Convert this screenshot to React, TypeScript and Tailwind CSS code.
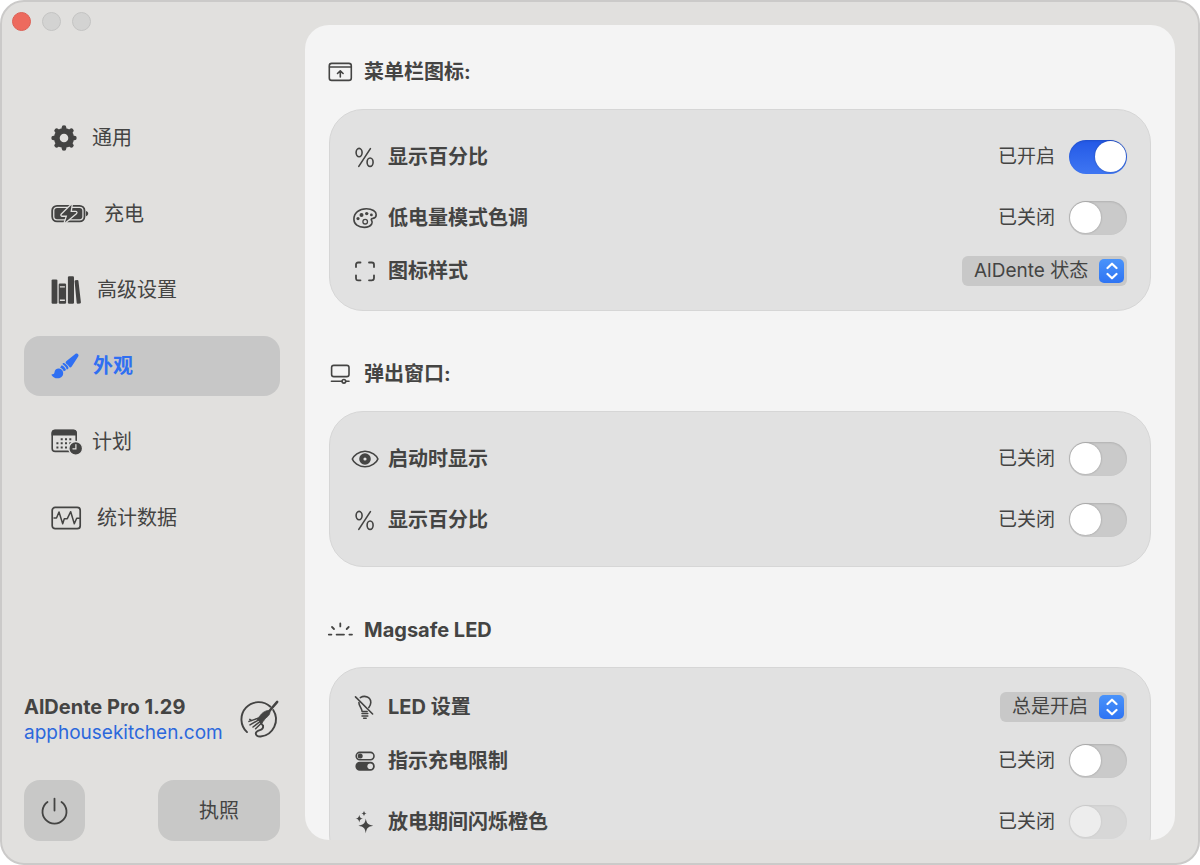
import React, { useId, useState } from "react";

const fontStack = "font-['Inter','Noto_Sans_CJK_SC',sans-serif]";

/* sidebar icons */

const GearIcon = () => (
  <svg width="26" height="26" viewBox="0 0 26 26" fill="none" stroke="currentColor">
    <circle cx="13" cy="13" r="7.2" strokeWidth="5.8" />
    <g strokeWidth="4.6" strokeLinecap="round">
      {[0, 45, 90, 135, 180, 225, 270, 315].map((a) => (
        <path key={a} d="M13 4.5V2.6" transform={`rotate(${a} 13 13)`} />
      ))}
    </g>
  </svg>
);

const BatteryIcon = () => (
  <svg width="38" height="20" viewBox="0 0 38 20" fill="none">
    <rect x="1.2" y="1.8" width="32.3" height="15.6" rx="4.8" stroke="currentColor" strokeWidth="1.8" />
    <rect x="3.4" y="4" width="27.9" height="11.2" rx="2.6" fill="currentColor" />
    <path d="M35 7c1.5.4 2.200 1.400 2.200 2.600s-.7 2.200-2.200 2.600z" fill="currentColor" />
    <path
      d="M20.6.8 10.8 10.4c-.5.6-.3 1.200.5 1.200h4.900L13.900 18.400 25 9.200c.6-.6.3-1.200-.4-1.200h-5.100z"
      fill="currentColor"
      stroke="#e1e0de"
      strokeWidth="2.6"
      strokeLinejoin="round"
      style={{ paintOrder: "stroke" }}
    />
  </svg>
);

const BooksIcon = () => (
  <svg width="31" height="28" viewBox="0 0 31 28" fill="currentColor">
    <rect x=".6" y="3.4" width="5.8" height="24.3" rx="1.2" />
    <rect x="7.7" y="7.6" width="7.4" height="20.1" rx="1.2" />
    <path d="M8.9 10.9h5M8.900 24.200h5" stroke="#e1e0de" strokeWidth="1.4" />
    <rect x="16.9" y=".3" width="6.1" height="27.4" rx="1.2" />
    <path d="M23.6 5.200c0-.6.3-.9.800-1l2-.2c.6 0 .9.300 1 .800l2.500 21.500c.1.600-.2 1-.8 1.100l-2.400.3c-.6 0-.9-.3-1-.8z" />
  </svg>
);

const BrushIcon = () => (
  <svg width="27" height="26" viewBox="0 0 27 26" fill="currentColor" className="overflow-visible">
    <path d="M24.300.9c2-1.300 4.100.8 2.900 2.700l-6.500 9.900c-.8 1.200-2 1.300-2.700.1-.7-1.200-1.600-2.100-2.700-2.800-1-.7-.9-1.700.2-2.700z" />
    <path d="M13.400 10.200c-.6-.4-1.100-.3-1.500.1-.5.500-.3.900.200 1.300 1.600 1.100 2.800 2.600 3.400 4.300.2.600.8.700 1.300.2.700-.6.800-1.100.5-1.900-.7-1.700-2.200-3.200-3.900-4z" />
    <path d="M10.700 12.200c-.7.700-1.200 1.500-1.500 2.600 1.700.6 2.900 1.700 3.500 3.400 1-.2 1.700-.6 2.300-1.300-.6-2.100-2.100-3.800-4.300-4.700z" />
    <path d="M8.200 15.600c-2.600-.3-4.500 1.500-4.700 3.700-.1 1.400-.8 2-2.200 1.900-.6 0-.9.500-.6 1 1.300 2.200 3.600 3.300 6.200 3.100 3.500-.2 5.700-2.900 5.200-5.900-.3-2.100-1.800-3.500-3.900-3.800z" />
  </svg>
);

const CalendarIcon = () => (
  <svg width="26" height="26" viewBox="0 0 26 26" fill="none" className="overflow-visible">
    <rect x="1.2" y="1.4" width="24" height="21" rx="3" stroke="currentColor" strokeWidth="1.6" />
    <path d="M.6 6.600V4C.6 1.900 1.900.7 4 .7h18.400c2.100 0 3.400 1.200 3.400 3.300v2.600z" fill="currentColor" />
    <path
      d="M10.700 10.200h.01M15 10.200h.01M19.300 10.200h.01M6.400 14.200h.01M10.700 14.200h.01M15 14.200h.01M19.300 14.200h.01M6.400 18.400h.01M10.700 18.400h.01M15 18.400h.01"
      stroke="currentColor"
      strokeWidth="2"
      strokeLinecap="square"
    />
    <circle cx="24.7" cy="19.4" r="6.9" fill="currentColor" stroke="#e1e0de" strokeWidth="1.4" />
    <path d="M24.900 15.600v4.200h-3" stroke="#e1e0de" strokeWidth="1.2" strokeLinecap="round" />
  </svg>
);

const StatsIcon = () => (
  <svg width="31" height="24" viewBox="0 0 31 24" fill="none" stroke="currentColor" strokeLinejoin="round">
    <rect x="1.2" y="1.4" width="28" height="21.3" rx="3" strokeWidth="1.7" />
    <path d="M3 12h2.500L8 6l3.700 11.700 1.600-5h3l3.400-7 3.600 12 2.400-5.400h2.600" strokeWidth="1.5" strokeLinecap="round" />
  </svg>
);

// fork on a round plate, its cable closing the rim
const ForkLogo = () => (
  <svg width="40" height="40" viewBox="0 0 40 40" fill="none" stroke="currentColor" strokeLinecap="round" strokeLinejoin="round">
    <path d="M7 32.100A17.200 17.200 0 0 1 30.400 6.700" strokeWidth="1.9" />
    <path d="M33.200 10.100A17.200 17.200 0 0 1 20.600 36.500c-3 .3-5-1.300-4.800-3.200.2-2 2-2.600 4-3.200 2.600-.8 3.700-1.800 3.300-4.300" strokeWidth="1.9" />
    <path d="M37.200 1.900 29.600 10.800" strokeWidth="2.5" />
    <path d="M30 10.600c.3 2.800-.6 4.600-2.900 6.400-2 1.500-2.500 2.600-4 4.600l-1.800 1.600-4.600-4.500c1.500-.9 2.700-1.900 3.900-3.700 1.800-2.400 5.600-5.200 9.400-4.400z" fill="currentColor" strokeWidth=".8" />
    <path d="M17.600 18.400 9 21.400M18.800 19.800 10 24.900M20.300 21.400 13 27M22 22.500 15.600 28.700M11.400 20.600l-1.600-1.200" strokeWidth="1.5" />
    <path d="M20.600 22.400 23 25.800" strokeWidth="1.8" />
  </svg>
);

const PowerIcon = () => (
  <svg width="28" height="28" viewBox="0 0 28 28" fill="none" stroke="currentColor" strokeWidth="1.8" strokeLinecap="round">
    <path d="M13.500 1.600v12M6.500 4.900a12 12 0 1 0 14 0" />
  </svg>
);

/* settings icons, all in a 24px box */

const Glyph = ({ children }: { children: React.ReactNode }) => (
  <svg
    viewBox="0 0 24 24"
    className="size-6 shrink-0 overflow-visible"
    fill="none"
    stroke="currentColor"
    strokeWidth="1.6"
    strokeLinecap="round"
    strokeLinejoin="round"
    aria-hidden="true"
  >
    {children}
  </svg>
);

const MenuBarIcon = () => (
  <Glyph>
    <rect x=".3" y="3.4" width="22" height="17" rx="2.4" />
    <path d="M.6 7h21.400M11.300 17v-6M8.500 13.500l2.800-2.700 2.800 2.700" />
  </Glyph>
);

const PopoverIcon = () => (
  <Glyph>
    <rect x="2.6" y="3.4" width="17.4" height="11.2" rx="2.2" />
    <path d="M2.400 19.300h10.400M17 19.300h3" />
    <circle cx="14.9" cy="19.3" r="1.8" />
  </Glyph>
);

const LightIcon = () => (
  <Glyph>
    <path d="M-.2 16.600h2.600M7.600 16.600h7.400M20.400 16.600h2.600M11.300 5.400v3M3 9l2 2M19.700 9l-2 2" strokeWidth="1.8" />
  </Glyph>
);

const PercentIcon = () => (
  <Glyph>
    <ellipse cx="6.1" cy="7.6" rx="3" ry="4.2" />
    <ellipse cx="17.1" cy="17.2" rx="3" ry="4.2" />
    <path d="M17.400 3.600 5.800 21.400" />
  </Glyph>
);

const PaletteIcon = () => (
  <Glyph>
    <path d="M13.400 2.800c5.800 0 9.800 2.500 9.800 5.900 0 2.500-1.400 3.300-3.300 3.700-1.700.3-2.100 1-1.300 2.100.9 1.400.9 2.300.1 3.500-1.200 2-3.800 3.400-7.400 3.400C5.200 21.400.9 18.100.9 13.200.9 7 6 2.800 13.400 2.800z" />
    <circle cx="12.2" cy="15.7" r="2.3" strokeWidth="1.3" />
    <g fill="currentColor" stroke="none">
      <circle cx="5" cy="12.6" r="1.6" />
      <circle cx="8.5" cy="9.1" r="2" />
      <circle cx="13.7" cy="7.6" r="1.7" />
      <circle cx="18.4" cy="8.9" r="1.4" />
    </g>
  </Glyph>
);

const FrameIcon = () => (
  <Glyph>
    <path d="M3 8V5.700c0-1.500.7-2.200 2.200-2.200h2.300M16 3.500h2.800c1.500 0 2.200.7 2.200 2.200V8M21 16.300v2.800c0 1.500-.7 2.200-2.200 2.200H16M7.500 21.300H5.200C3.700 21.300 3 20.600 3 19.100v-2.800" strokeWidth="1.8" />
  </Glyph>
);

const EyeIcon = () => (
  <Glyph>
    <path d="M-.7 12C.9 8.700 5.600 4.200 12 4.200S23.900 8.700 24.900 12c-1 3.300-6.500 7.800-12.900 7.800S.4 15.300-.7 12z" />
    <circle cx="12" cy="12" r="3.7" strokeWidth="4.2" />
  </Glyph>
);

const BulbOffIcon = () => (
  <Glyph>
    <path d="M2.500 1.900 19.600 19" />
    <path d="M7.300 2.600c4.600-2.900 10.500-.3 10.500 4.800 0 2.100-.9 3.500-2 5.200M5.900 7.600c-.1 3.200 2.900 5 3.200 8.900h5" />
    <path d="M9 18.600h5.800M9 21h5.800M10.600 23.200h2.600" strokeWidth="1.5" />
  </Glyph>
);

const SwitchesIcon = () => (
  <Glyph>
    <rect x="3.2" y="3.4" width="17.8" height="7.3" rx="3.6" />
    <circle cx="7.2" cy="7.1" r="2.5" fill="currentColor" stroke="none" />
    <rect x="3.2" y="13.6" width="17.8" height="7.3" rx="3.6" fill="currentColor" />
    <circle cx="17.2" cy="17.3" r="2.8" fill="#e1e1e1" stroke="none" />
  </Glyph>
);

const SparklesIcon = () => (
  <Glyph>
    <g fill="currentColor" stroke="none">
      <path d="M12.800 8.600c.9 5 1.900 6.200 7.400 7.200-5.500 1-6.500 2.200-7.400 7.400-.9-5.200-1.900-6.400-7.400-7.400 5.500-1 6.500-2.200 7.400-7.200z" />
      <path d="M6.300 4.700c.6 2.800 1.100 3.300 3.900 3.900-2.800.6-3.300 1.100-3.900 3.900-.6-2.800-1.100-3.300-3.900-3.900 2.800-.6 3.300-1.100 3.900-3.900z" />
      <path d="M11 .8c.5 1.900.8 2.300 2.700 2.700-1.900.4-2.200.8-2.700 2.700-.5-1.900-.8-2.300-2.700-2.700C10.200 3.100 10.500 2.700 11 .8z" />
    </g>
  </Glyph>
);

const tabs = [
  { name: "通用", icon: <GearIcon /> },
  { name: "充电", icon: <BatteryIcon /> },
  { name: "高级设置", icon: <BooksIcon /> },
  { name: "外观", icon: <BrushIcon /> },
  { name: "计划", icon: <CalendarIcon /> },
  { name: "统计数据", icon: <StatsIcon /> },
];

type RowProps = { icon: React.ReactNode; title: string };

function ToggleRow({ icon, title, on = false, disabled = false }: RowProps & { on?: boolean; disabled?: boolean }) {
  const id = useId();
  const [checked, setChecked] = useState(on);

  return (
    <div className="flex h-[61px] items-center">
      {icon}
      <label htmlFor={id} className="ml-[11px] font-bold">{title}</label>
      <span className="ml-auto mr-[14px] text-[19px]">{checked ? "已开启" : "已关闭"}</span>
      <input
        id={id}
        type="checkbox"
        role="switch"
        checked={checked}
        disabled={disabled}
        onChange={(e) => setChecked(e.target.checked)}
        className="flex h-[34px] w-[58px] appearance-none items-center rounded-full bg-[#cacaca] px-px shadow-[inset_0_1px_2px_rgba(0,0,0,0.12)] before:size-[31px] before:rounded-full before:bg-white before:shadow-[0_0_2px_rgba(0,0,0,0.3)] before:content-[''] checked:justify-end checked:bg-linear-to-b checked:from-[#2358e6] checked:to-[#3f76f2] disabled:opacity-40"
      />
    </div>
  );
}

function SelectRow({ icon, title, value }: RowProps & { value: string }) {
  const id = useId();

  return (
    <div className="flex h-[46px] items-center">
      {icon}
      <label htmlFor={id} className="ml-[11px] font-bold">{title}</label>
      <div className="relative ml-auto">
        <select id={id} className="block h-[30px] appearance-none rounded-md bg-[#c8c8c8] pl-3 pr-[38px] text-[19px] leading-[28px]">
          <option>{value}</option>
        </select>
        <span className="pointer-events-none absolute right-[3px] top-[3px] flex h-6 w-[25px] items-center justify-center rounded-[5px] bg-linear-to-b from-[#4a93fa] to-[#2f74f3]">
          <svg width="12" height="18" viewBox="0 0 12 18" fill="none" stroke="white" strokeWidth="2.2" strokeLinecap="round" strokeLinejoin="round">
            <path d="M1.500 6 6 1.700 10.500 6M1.500 12 6 16.300 10.500 12" />
          </svg>
        </span>
      </div>
    </div>
  );
}

function Section({ icon, title, children }: RowProps & { children: React.ReactNode }) {
  return (
    <section>
      <h2 className="flex h-[30px] items-center gap-[11px] font-bold">{icon}{title}</h2>
      <div className="mt-[22px] rounded-[34px] border border-[#d6d6d6] bg-[#e1e1e1] px-[23px] py-4">{children}</div>
    </section>
  );
}

export default function App() {
  const [active, setActive] = useState("外观");

  return (
    <div className={`flex h-screen rounded-[24px] border-2 border-[#cbcac9] bg-[#e1e0de] text-[20px] leading-7 text-[#444443] ${fontStack}`}>
      <aside className="flex w-[303px] shrink-0 flex-col pb-[22px]">
        <div className="flex gap-[11px] px-[10px] pt-[10px]">
          <button aria-label="关闭" className="size-[19px] rounded-full border border-[#dd6055] bg-[#ed6a5e]" />
          <button aria-label="最小化" className="size-[19px] rounded-full border border-[#c4c4c3] bg-[#d3d3d2]" />
          <button aria-label="缩放" className="size-[19px] rounded-full border border-[#c4c4c3] bg-[#d3d3d2]" />
        </div>

        <nav className="mt-[77px] flex flex-col gap-4 pl-[22px] pr-[25px]">
          {tabs.map((tab) => (
            <button
              key={tab.name}
              onClick={() => setActive(tab.name)}
              className={`flex h-[60px] items-center gap-[15px] rounded-2xl px-[27px] ${tab.name === active ? "bg-[#c7c7c7] font-bold text-[#2f6ff2]" : ""}`}
            >
              {tab.icon}
              {tab.name}
            </button>
          ))}
        </nav>

        <div className="mt-auto flex items-center justify-between pl-[22px] pr-[25px]">
          <div className="leading-[25px]">
            <p className="font-bold">AlDente Pro 1.29</p>
            <a href="#" className="text-[19px] text-[#2c68dc]">apphousekitchen.com</a>
          </div>
          <ForkLogo />
        </div>

        <div className="mt-[35px] flex justify-between pl-[22px] pr-[25px]">
          <button aria-label="退出" className="flex size-[61px] items-center justify-center rounded-2xl bg-[#c8c8c7]">
            <PowerIcon />
          </button>
          <button className="h-[61px] w-[122px] rounded-2xl bg-[#c8c8c7]">执照</button>
        </div>
      </aside>

      <main className="my-[23px] mr-[23px] flex flex-1 flex-col gap-12 overflow-y-auto rounded-[24px] bg-[#f4f4f4] px-6 py-8 [scrollbar-width:none]">
        <Section icon={<MenuBarIcon />} title="菜单栏图标:">
          <ToggleRow icon={<PercentIcon />} title="显示百分比" on />
          <ToggleRow icon={<PaletteIcon />} title="低电量模式色调" />
          <SelectRow icon={<FrameIcon />} title="图标样式" value="AlDente 状态" />
        </Section>

        <Section icon={<PopoverIcon />} title="弹出窗口:">
          <ToggleRow icon={<EyeIcon />} title="启动时显示" />
          <ToggleRow icon={<PercentIcon />} title="显示百分比" />
        </Section>

        <Section icon={<LightIcon />} title="Magsafe LED">
          <SelectRow icon={<BulbOffIcon />} title="LED 设置" value="总是开启" />
          <ToggleRow icon={<SwitchesIcon />} title="指示充电限制" />
          <ToggleRow icon={<SparklesIcon />} title="放电期间闪烁橙色" disabled />
        </Section>
      </main>
    </div>
  );
}
